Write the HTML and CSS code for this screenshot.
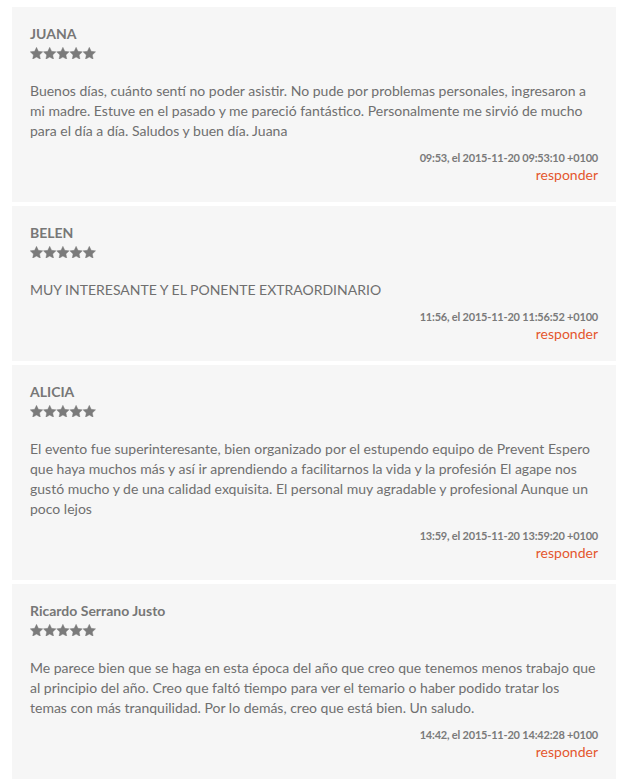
FILE: index.html
```html
<!DOCTYPE html>
<html lang="es">
<head>
<meta charset="utf-8">
<title>Comentarios</title>
<link rel="stylesheet" href="styles.css">
</head>
<body>
<svg width="0" height="0" class="defs" aria-hidden="true">
  <defs>
    <polygon id="star" points="6.5,0.3 8.38,4.31 12.78,4.86 9.54,7.89 10.38,12.24 6.5,10.1 2.62,12.24 3.46,7.89 0.22,4.86 4.62,4.31" stroke-linejoin="round"/>
  </defs>
</svg>
<div class="list">
  <article class="card">
    <h4 class="name">JUANA</h4>
    <svg class="stars" width="66" height="12" viewBox="0 0 66 12"><use href="#star"/><use href="#star" x="13.2"/><use href="#star" x="26.4"/><use href="#star" x="39.6"/><use href="#star" x="52.8"/></svg>
    <p class="body">Buenos días, cuánto sentí no poder asistir. No pude por problemas personales, ingresaron a mi madre. Estuve en el pasado y me pareció fantástico. Personalmente me sirvió de mucho para el día a día. Saludos y buen día. Juana</p>
    <div class="meta">09:53, el 2015-11-20 09:53:10 +0100</div>
    <div class="reply"><a href="#">responder</a></div>
  </article>
  <article class="card">
    <h4 class="name">BELEN</h4>
    <svg class="stars" width="66" height="12" viewBox="0 0 66 12"><use href="#star"/><use href="#star" x="13.2"/><use href="#star" x="26.4"/><use href="#star" x="39.6"/><use href="#star" x="52.8"/></svg>
    <p class="body">MUY INTERESANTE Y EL PONENTE EXTRAORDINARIO</p>
    <div class="meta">11:56, el 2015-11-20 11:56:52 +0100</div>
    <div class="reply"><a href="#">responder</a></div>
  </article>
  <article class="card">
    <h4 class="name">ALICIA</h4>
    <svg class="stars" width="66" height="12" viewBox="0 0 66 12"><use href="#star"/><use href="#star" x="13.2"/><use href="#star" x="26.4"/><use href="#star" x="39.6"/><use href="#star" x="52.8"/></svg>
    <p class="body">El evento fue superinteresante, bien organizado por el estupendo equipo de Prevent Espero que haya muchos más y así ir aprendiendo a facilitarnos la vida y la profesión El agape nos gustó mucho y de una calidad exquisita. El personal muy agradable y profesional Aunque un poco lejos</p>
    <div class="meta">13:59, el 2015-11-20 13:59:20 +0100</div>
    <div class="reply"><a href="#">responder</a></div>
  </article>
  <article class="card">
    <h4 class="name">Ricardo Serrano Justo</h4>
    <svg class="stars" width="66" height="12" viewBox="0 0 66 12"><use href="#star"/><use href="#star" x="13.2"/><use href="#star" x="26.4"/><use href="#star" x="39.6"/><use href="#star" x="52.8"/></svg>
    <p class="body">Me parece bien que se haga en esta época del año que creo que tenemos menos trabajo que al principio del año. Creo que faltó tiempo para ver el temario o haber podido tratar los temas con más tranquilidad. Por lo demás, creo que está bien. Un saludo.</p>
    <div class="meta">14:42, el 2015-11-20 14:42:28 +0100</div>
    <div class="reply"><a href="#">responder</a></div>
  </article>
</div>
</body>
</html>
```
FILE: styles.css
```css
html, body {
  margin: 0;
  padding: 0;
  background: #ffffff;
}
body {
  font-family: Lato, "Open Sans", sans-serif;
  color: #777777;
}
.defs {
  position: absolute;
  width: 0;
  height: 0;
}
.list {
  display: flex;
  flex-direction: column;
  gap: 4px;
  padding: 7px 10px 0 12px;
}
.card {
  background: #f6f6f6;
  padding: 17px 18px 17px 18px;
  display: flex;
  flex-direction: column;
}
.name {
  margin: 0;
  font-size: 14px;
  line-height: 20px;
  font-weight: 700;
  color: #777777;
}
.stars {
  display: block;
  margin-top: 3px;
  fill: #7b7b7b;
  stroke: #7b7b7b;
  stroke-width: 0.4;
}
.body {
  margin: 22px 0 0 0;
  font-size: 14px;
  line-height: 20px;
  color: #6f6f6f;
}
.meta {
  margin-top: 9px;
  text-align: right;
  font-size: 11px;
  line-height: 15px;
  font-weight: 700;
  color: #7a7a7a;
  letter-spacing: -0.2px;
}
.reply {
  text-align: right;
  font-size: 14px;
  line-height: 20px;
}
.reply a {
  color: #e4572e;
  text-decoration: none;
}
```
